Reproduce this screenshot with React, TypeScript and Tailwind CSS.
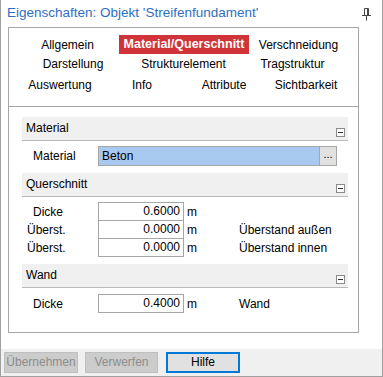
import React from "react";

const font = { fontFamily: '"Liberation Sans", Arial, sans-serif' };

function Collapse() {
  return (
    <div className="w-[9px] h-[9px] border border-[#8a8a8a] bg-white flex items-center justify-center">
      <div className="w-[5px] h-px bg-[#333]" />
    </div>
  );
}

function Header({ title }: { title: string }) {
  return (
    <div className="h-[24px] bg-[#f0f0f0] border-b border-[#b9b9b9] flex items-end justify-between pl-[4px] pr-[3px] pb-[3px]">
      <span className="self-center mt-[1px] text-[12px] text-black">{title}</span>
      <Collapse />
    </div>
  );
}

function NumRow({ label, value, desc, pl }: { label: string; value: string; desc?: string; pl: string }) {
  return (
    <div className="flex items-center h-[19px] -mt-px first:mt-0">
      <div className={`w-[76px] ${pl} text-[12px]`}>{label}</div>
      <div className="w-[86px] h-[19px] border border-[#a6a6a6] bg-white text-right pr-[3px] text-[12px] leading-[17px]">{value}</div>
      <div className="w-[55px] pl-[3px] text-[12px]">m</div>
      <div className="text-[12px]">{desc}</div>
    </div>
  );
}

export default function App() {
  return (
    <div style={font} className="w-[383px] h-[377px] bg-white border-l border-r border-b border-[#a0a0a0] flex flex-col text-black">
      <div className="h-[27px] flex items-start justify-between pl-[6px] pr-[11px] pt-[4px]">
        <span className="text-[13.5px] text-[#2f6fbf] leading-[18px]">Eigenschaften: Objekt 'Streifenfundament'</span>
        <svg width="9" height="13" viewBox="0 0 9 13" className="mt-[4px]">
          <path d="M2.5 0.5 H6.5 M2.5 0.5 V7 M6.5 0.5 V7 M0 7.5 H9 M4.5 7.5 V12.5 M5.5 1 V7" stroke="#444" strokeWidth="1" fill="none" />
        </svg>
      </div>
      <div className="ml-[7px] w-[351px] h-[306px] border border-[#a6a6a6] flex flex-col">
        <div className="h-[79px] border-b border-[#a6a6a6] text-[12px]">
          <div className="flex mt-[7px] h-[19px] pl-[11px] items-center">
            <div className="w-[95px] text-center">Allgemein</div>
            <div className="ml-[4px] w-[130px] h-[19px] bg-[#d13438] text-white font-bold text-center leading-[19px] text-[12.5px]">Material/Querschnitt</div>
            <div className="ml-[4px] w-[91px] text-center">Verschneidung</div>
          </div>
          <div className="flex h-[20px] pl-[11px] items-center">
            <div className="w-[106px] text-center">Darstellung</div>
            <div className="ml-[3px] w-[109px] text-center">Strukturelement</div>
            <div className="ml-[3px] w-[103px] text-center">Tragstruktur</div>
          </div>
          <div className="flex h-[20px] mt-[1px] pl-[10px] items-center">
            <div className="w-[82px] text-center">Auswertung</div>
            <div className="w-[82px] text-center">Info</div>
            <div className="w-[82px] text-center">Attribute</div>
            <div className="w-[82px] text-center">Sichtbarkeit</div>
          </div>
        </div>
        <div className="pl-[13px] pr-[10px] pt-[10px] text-[12px]">
          <Header title="Material" />
          <div className="flex items-center h-[32px] pb-[3px]">
            <div className="w-[76px] pl-[11px]">Material</div>
            <div className="w-[221px] h-[20px] bg-[#a8c9f0] border border-[#a6a6a6] border-r-0 pl-[3px] leading-[18px]">Beton</div>
            <div className="w-[18px] h-[20px] bg-[#e1e1e1] border border-[#a6a6a6] text-center leading-[14px] text-[11px]">...</div>
          </div>
          <Header title="Querschnitt" />
          <div className="pt-[5px] pb-[7px]">
            <NumRow label="Dicke" value="0.6000" pl="pl-[11px]" />
            <NumRow label="Überst." value="0.0000" desc="Überstand außen" pl="pl-[5px]" />
            <NumRow label="Überst." value="0.0000" desc="Überstand innen" pl="pl-[5px]" />
          </div>
          <Header title="Wand" />
          <div className="pt-[6px]">
            <NumRow label="Dicke" value="0.4000" desc="Wand" pl="pl-[11px]" />
          </div>
        </div>
      </div>
      <div className="h-[16px]" />
      <div className="h-[27px] bg-[#f0f0f0] flex items-center pl-[3px] text-[12px]">
        <div className="w-[74px] h-[21px] bg-[#cccccc] border border-[#bfbfbf] text-[#8d8d8d] text-center leading-[19px]">Übernehmen</div>
        <div className="ml-[7px] w-[73px] h-[21px] bg-[#cccccc] border border-[#bfbfbf] text-[#8d8d8d] text-center leading-[19px]">Verwerfen</div>
        <div className="ml-[8px] w-[74px] h-[21px] bg-[#e1e1e1] border-2 border-[#0078d7] text-black text-center leading-[17px]">Hilfe</div>
      </div>
    </div>
  );
}
